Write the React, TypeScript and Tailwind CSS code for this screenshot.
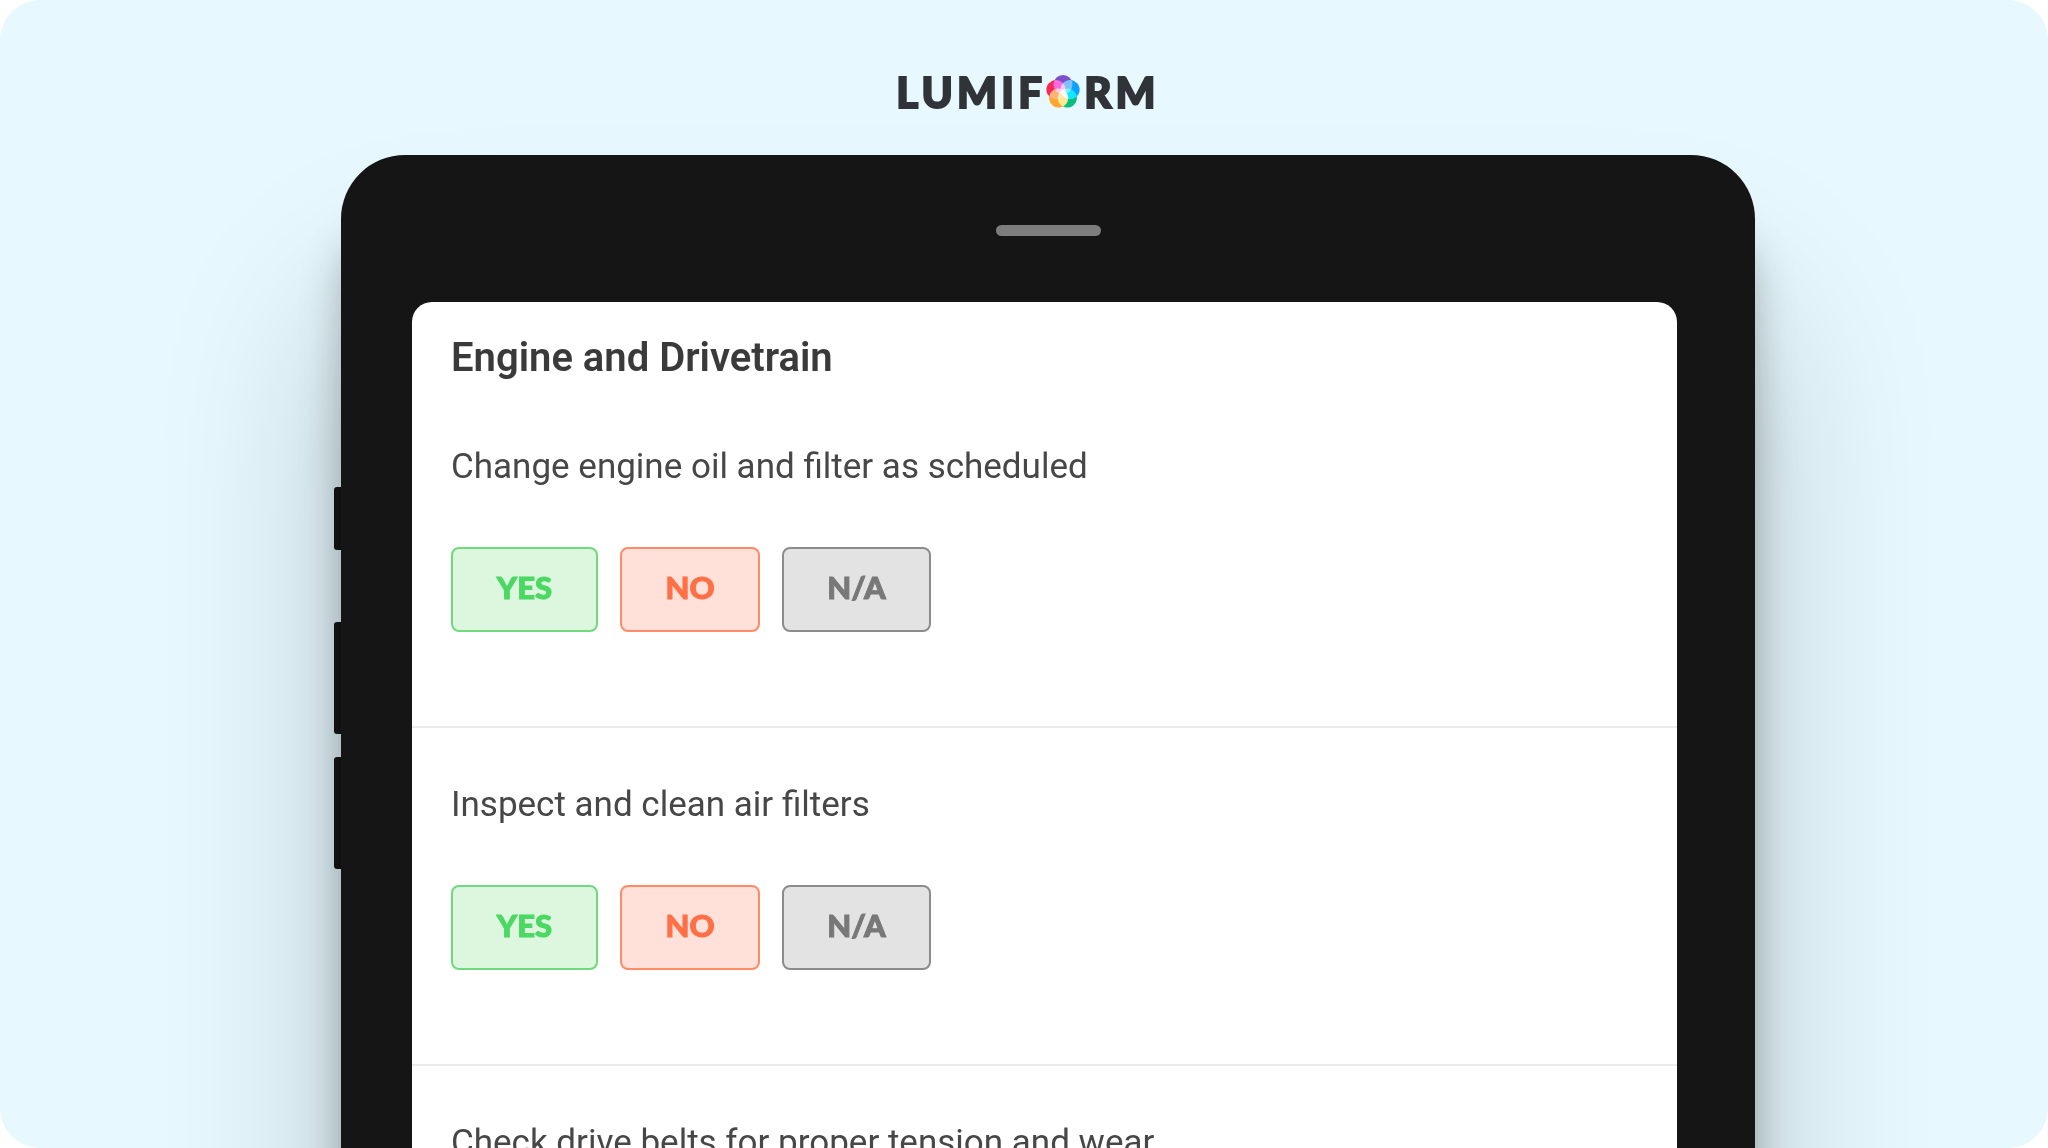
type Answer = {
  label: string
  className: string
}

const answers: Answer[] = [
  { label: 'YES', className: 'w-[147px] border-[#6fda7d] bg-[#ddf7df] text-[#4bd863]' },
  { label: 'NO', className: 'w-[140px] border-[#ff8b68] bg-[#ffe1d9] text-[#ff7046]' },
  { label: 'N/A', className: 'w-[149px] border-[#8c8c8c] bg-[#e3e3e3] text-[#787878]' },
]

const questions = [
  { text: 'Change engine oil and filter as scheduled', open: true },
  { text: 'Inspect and clean air filters', open: true },
  { text: 'Check drive belts for proper tension and wear', open: false },
]

export default function App() {
  return (
    <div className="h-screen overflow-hidden rounded-[40px] bg-[#e7f9ff] font-['Roboto',sans-serif]">
      <header className="flex h-[155px] items-start justify-center pt-[68px] pl-2">
        <Logo />
      </header>

      {/* Tablet, running off the bottom edge */}
      <main className="grid grid-cols-[341fr_1414fr_293fr]">
        <SideButtons />
        <div className="rounded-t-[64px] bg-[#151515] pr-[78px] pb-[240px] pl-[71px] shadow-[0_70px_40px_rgba(0,0,0,0.25),0_150px_180px_rgba(0,0,0,0.22)]">
          <div className="flex h-[147px] items-center justify-center pt-1 pl-[7px]">
            <div className="h-[11px] w-[105px] rounded-full bg-[#7d7d7d]" />
          </div>
          <section className="rounded-t-[20px] bg-white">
            <h1 className="px-[39px] pt-[32px] pb-2 text-[40px] leading-[48px] font-semibold text-[#3a3a3a]">
              Engine and Drivetrain
            </h1>
            {questions.map(q => (
              <Question key={q.text} text={q.text} open={q.open} />
            ))}
          </section>
        </div>
      </main>
    </div>
  )
}

function Question({ text, open }: { text: string; open: boolean }) {
  return (
    <div className="border-b-2 border-[#ebebeb] px-[39px] pt-[57px] pb-[94px]">
      <p className="text-[35px] leading-[40px] text-[#474747]">{text}</p>
      {open && (
        <div className="mt-[60px] flex gap-[22px]">
          {answers.map(a => (
            <button
              key={a.label}
              type="button"
              className={`h-[85px] rounded-lg border-2 pb-1 font-['Lato_Black','Lato',sans-serif] text-[31px] font-black [-webkit-text-stroke:1px_currentColor] ${a.className}`}
            >
              {a.label}
            </button>
          ))}
        </div>
      )}
    </div>
  )
}

function SideButtons() {
  return (
    <div className="flex flex-col items-end pt-[332px]">
      <div className="h-[63px] w-[7px] rounded-l-[3px] bg-[#151515]" />
      <div className="mt-[72px] h-[112px] w-[7px] rounded-l-[3px] bg-[#151515]" />
      <div className="mt-[23px] h-[112px] w-[7px] rounded-l-[3px] bg-[#151515]" />
    </div>
  )
}

function Logo() {
  return (
    <div className="flex items-center font-['Lato_Black','Lato',sans-serif] text-[42px] leading-[48px] font-black tracking-widest text-[#303438] [-webkit-text-stroke:2px_currentColor]">
      <span>LUMIF</span>
      <svg viewBox="-16 -16 32 32" className="mr-1 h-[34px] w-[34px]" role="img" aria-label="O">
        <g className="isolate">
          {/* Overlapping petals, lighter where they cross */}
          <circle cx="0" cy="-7" r="9" fill="#7b50c8" className="mix-blend-screen" />
          <circle cx="0" cy="-7" r="9" fill="#0aa2ff" transform="rotate(72)" className="mix-blend-screen" />
          <circle cx="0" cy="-7" r="9" fill="#08bd7d" transform="rotate(144)" className="mix-blend-screen" />
          <circle cx="0" cy="-7" r="9" fill="#ffa62e" transform="rotate(216)" className="mix-blend-screen" />
          <circle cx="0" cy="-7" r="9" fill="#fa2858" transform="rotate(288)" className="mix-blend-screen" />
        </g>
      </svg>
      <span>RM</span>
    </div>
  )
}
